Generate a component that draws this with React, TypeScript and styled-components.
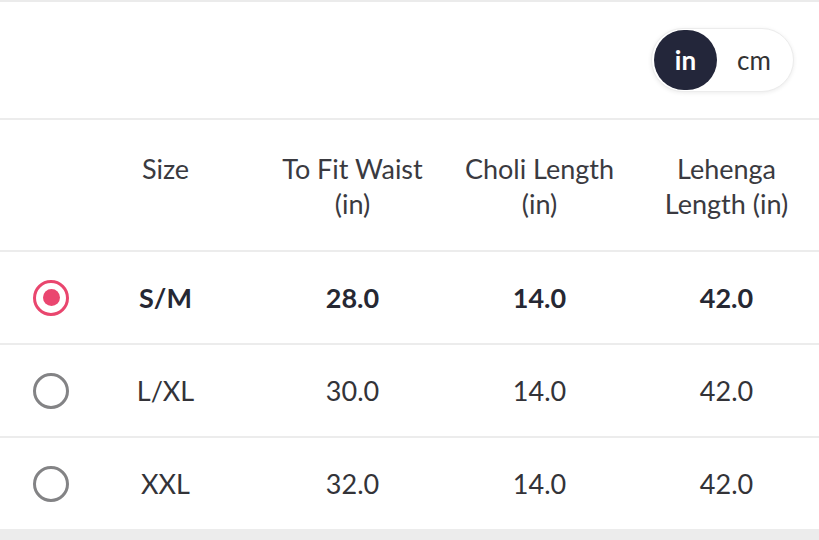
import React, { useState } from "react";
import styled, { createGlobalStyle } from "styled-components";

const Global = createGlobalStyle`
  *, *::before, *::after { box-sizing: border-box; }
  html, body { margin: 0; padding: 0; background: #fff; }
  body { font-family: Lato, "Noto Sans", sans-serif; color: #2a2b33; }
`;

const Page = styled.div`
  width: 819px;
  height: 540px;
  overflow: hidden;
  border-top: 2px solid #ebebeb;
  display: flex;
  flex-direction: column;
`;

const TopBar = styled.div`
  height: 118px;
  flex: none;
  display: flex;
  align-items: flex-start;
  justify-content: flex-end;
  padding: 26px 25px 0 0;
  border-bottom: 2px solid #ececec;
`;

const Toggle = styled.div`
  display: flex;
  align-items: center;
  height: 64px;
  padding: 0 2px;
  border-radius: 32px;
  border: 1px solid #ececec;
  box-shadow: 0 1px 4px rgba(0, 0, 0, 0.08);
  background: #fff;
`;

const UnitBtn = styled.button<{ $active: boolean }>`
  width: ${(p) => (p.$active ? "63px" : "74px")};
  height: 60px;
  border-radius: 30px;
  border: none;
  padding: 0;
  background: ${(p) => (p.$active ? "#23263a" : "transparent")};
  color: ${(p) => (p.$active ? "#fff" : "#333")};
  font-family: Lato, "Noto Sans", sans-serif;
  font-size: 26px;
  font-weight: ${(p) => (p.$active ? 700 : 400)};
  cursor: pointer;
`;

const Grid = styled.div`
  display: grid;
  grid-template-columns: 72px repeat(4, 187px);
  flex: none;
`;

const Row = styled.div<{ $h: number }>`
  display: contents;
  & > * {
    height: ${(p) => p.$h}px;
    border-bottom: 2px solid #ececec;
  }
`;

const Cell = styled.div<{ $bold?: boolean }>`
  display: flex;
  align-items: center;
  justify-content: center;
  text-align: center;
  font-size: 27px;
  line-height: 35px;
  font-weight: ${(p) => (p.$bold ? 700 : 400)};
  color: ${(p) => (p.$bold ? "#262833" : "#333338")};
`;

const HeadCell = styled(Cell)`
  align-items: flex-start;
  padding-top: 31px;
  color: #3a3a40;
`;

const RadioCell = styled.div`
  display: flex;
  align-items: center;
  justify-content: flex-start;
  padding-left: 33px;
`;

const Radio = styled.span<{ $on: boolean }>`
  width: 36px;
  height: 36px;
  flex: none;
  border-radius: 50%;
  border: 3px solid ${(p) => (p.$on ? "#e9466e" : "#838385")};
  display: flex;
  align-items: center;
  justify-content: center;
  cursor: pointer;
  &::after {
    content: "";
    display: ${(p) => (p.$on ? "block" : "none")};
    width: 17px;
    height: 17px;
    border-radius: 50%;
    background: #ea4670;
  }
`;

const Footer = styled.div`
  flex: 1;
  background: #ececec;
`;

const rows = [
  { size: "S/M", waist: "28.0", choli: "14.0", lehenga: "42.0" },
  { size: "L/XL", waist: "30.0", choli: "14.0", lehenga: "42.0" },
  { size: "XXL", waist: "32.0", choli: "14.0", lehenga: "42.0" },
];

export default function App() {
  const [unit, setUnit] = useState<"in" | "cm">("in");
  const [sel, setSel] = useState(0);
  return (
    <Page>
      <Global />
      <TopBar>
        <Toggle>
          <UnitBtn $active={unit === "in"} onClick={() => setUnit("in")}>in</UnitBtn>
          <UnitBtn $active={unit === "cm"} onClick={() => setUnit("cm")}>cm</UnitBtn>
        </Toggle>
      </TopBar>
      <Grid>
        <Row $h={132}>
          <div />
          <HeadCell>Size</HeadCell>
          <HeadCell>To Fit Waist<br />(in)</HeadCell>
          <HeadCell>Choli Length<br />(in)</HeadCell>
          <HeadCell>Lehenga<br />Length (in)</HeadCell>
        </Row>
        {rows.map((r, i) => (
          <Row key={r.size} $h={93}>
            <RadioCell>
              <Radio $on={sel === i} onClick={() => setSel(i)} />
            </RadioCell>
            <Cell $bold={sel === i}>{r.size}</Cell>
            <Cell $bold={sel === i}>{r.waist}</Cell>
            <Cell $bold={sel === i}>{r.choli}</Cell>
            <Cell $bold={sel === i}>{r.lehenga}</Cell>
          </Row>
        ))}
      </Grid>
      <Footer />
    </Page>
  );
}
